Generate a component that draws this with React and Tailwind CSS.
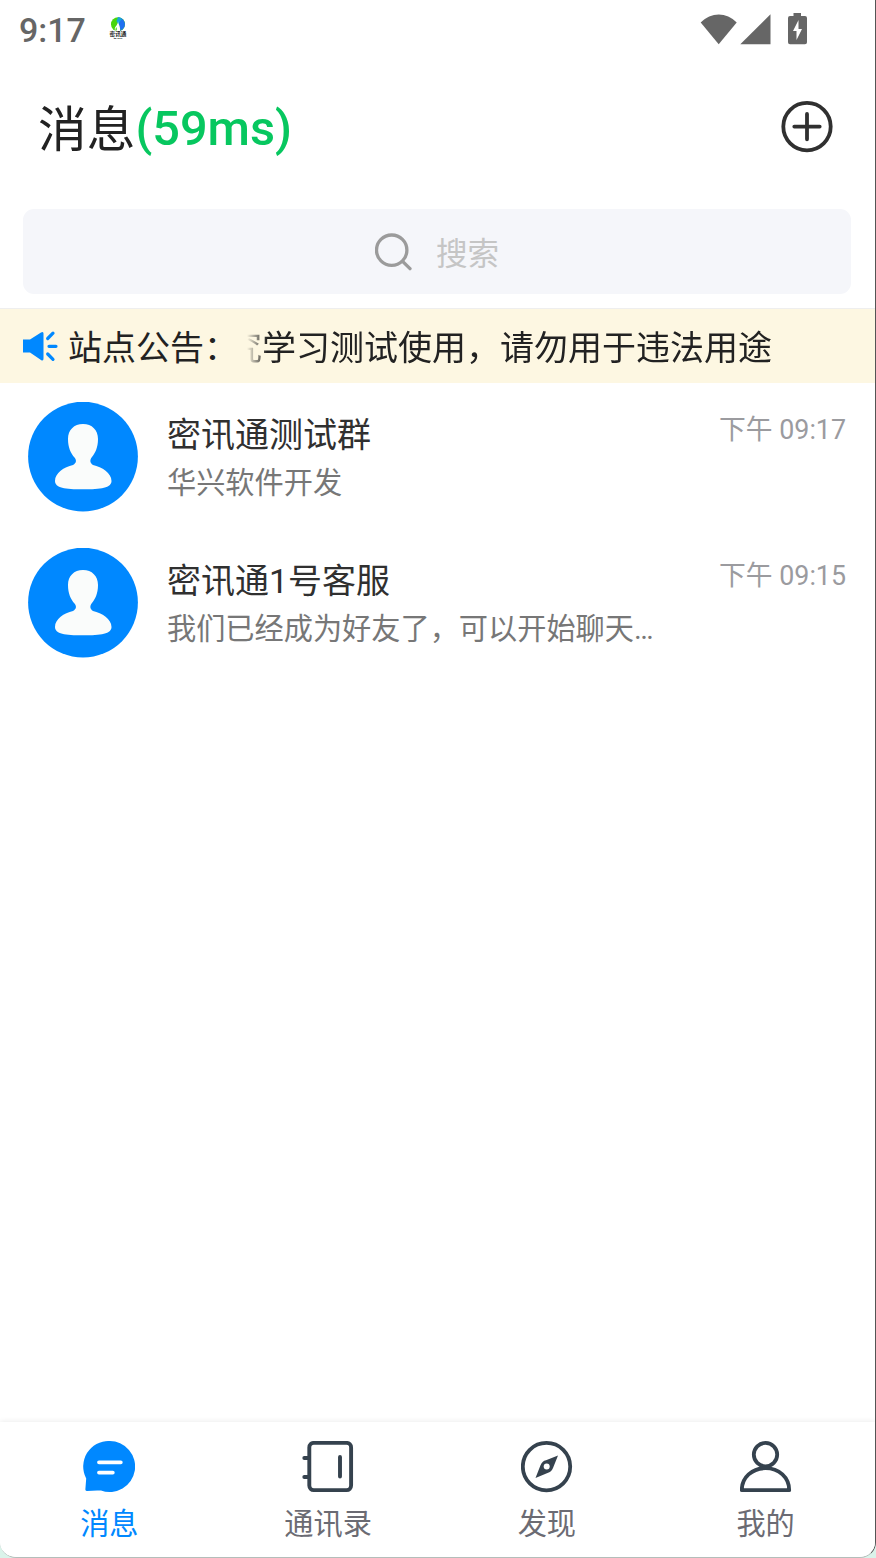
import React, { useState } from 'react';

const chats = [
  { id: 1, name: '密讯通测试群', preview: '华兴软件开发', time: '下午 09:17' },
  { id: 2, name: '密讯通1号客服', preview: '我们已经成为好友了，可以开始聊天…', time: '下午 09:15' },
];

const tabs = [
  { key: 'messages', label: '消息', Icon: MessageIcon },
  { key: 'contacts', label: '通讯录', Icon: ContactsIcon },
  { key: 'discover', label: '发现', Icon: CompassIcon },
  { key: 'me', label: '我的', Icon: UserIcon },
];

function MessageIcon() {
  return (
    <svg width="52" height="52" viewBox="0 0 52 52" fill="none">
      <path d="M26.3 0A25.5 25.5 0 1 1 18 49.5Q12 49.1 4 50Q2.1 50.2 2.4 48L3.2 37.5A25.5 25.5 0 0 1 26.3 0Z" fill="#0088ff" />
      <path d="M16 21.3H37.8M16 31.6H29.8" stroke="#fff" strokeWidth="3.8" strokeLinecap="round" />
    </svg>
  );
}

function ContactsIcon() {
  return (
    <svg width="52" height="52" viewBox="0 0 52 52" fill="none" stroke="#35424e" strokeWidth="3.9" strokeLinecap="round">
      <rect x="7.3" y="1.9" width="41.8" height="47.2" rx="4.5" />
      <path d="M2.3 17H6.5M2.3 36H6.5M38 16V35.5" />
    </svg>
  );
}

function CompassIcon() {
  return (
    <svg width="52" height="52" viewBox="0 0 52 52" fill="none">
      <circle cx="25.5" cy="25.6" r="23.7" stroke="#35424e" strokeWidth="3.8" />
      <path d="M37 14.5L32 27Q30.5 31 26.5 32L14.5 37L19.5 24.3Q21 20 25 19.2Z" fill="#35424e" />
      <circle cx="25.7" cy="25.6" r="3" fill="#fff" />
    </svg>
  );
}

function UserIcon() {
  return (
    <svg width="52" height="52" viewBox="0 0 52 52" fill="none" stroke="#35424e" strokeWidth="3.8" strokeLinejoin="round">
      <circle cx="25.5" cy="13.6" r="11.7" />
      <path d="M1.8 49.2C1.8 36.6 12 27.2 25.5 27.2S49.2 36.6 49.2 49.2Z" />
    </svg>
  );
}

function Avatar() {
  return (
    <svg width="110" height="110" viewBox="0 0 110 110" className="shrink-0">
      <circle cx="55" cy="54.6" r="54.9" fill="#0088ff" />
      <path
        d="M55 22C64 22 70 28 70 37C70 46 67 51 64 55C61.5 58 62 61 65 63C74 65 83.5 71 83.5 79C83.5 86 73 87.3 55 87.3S27 86 27 79C27 71 36 65 45 63C48.5 61 49 58 46 55C43 51 40 46 40 37C40 28 46 22 55 22Z"
        fill="#fafcfb"
      />
    </svg>
  );
}

function AppBadge() {
  return (
    <div className="ml-[23px] mt-[17px] w-[18px] flex flex-col items-center">
      <svg className="shrink-0" width="14" height="15" viewBox="0 0 14 15">
        <circle cx="7" cy="7.3" r="7" fill="#48d60c" />
        <path d="M7 .3A7 7 0 0 1 9 14C10.500 10.500 6.500 8 7 4Z" fill="#1f70f0" />
        <path d="M7 .3Q9.500 .5 11 2L7 7L5.500 4Z" fill="#16a6dc" />
        <path d="M7.200 3.500C6.500 6.500 9.800 8.500 9 14.500H4.500C7 12 5.500 11.500 5.300 10Q4 12 4.500 14.500Q2.500 11.500 5.500 8.500Q7.200 6.500 7.200 3.500Z" fill="#fff" />
      </svg>
      <span className="text-[5.6px] leading-[5px] font-bold text-[#222] whitespace-nowrap">密讯通</span>
      <span className="mt-px text-[2.5px] leading-[2px] font-bold text-[#222] whitespace-nowrap">MI XUN</span>
    </div>
  );
}

function StatusBar() {
  return (
    <div className="h-[60px] flex items-start pl-[19px] pr-[67px]">
      <span className="mt-[10px] text-[34px] leading-[40px] font-medium text-[#666]">9:17</span>
      <AppBadge />
      <svg className="ml-auto mt-3" width="108" height="34" viewBox="0 0 108 34" fill="#666">
        <path d="M.7 10.5C11 -.3 26.5 -.3 36.7 10.5L18.7 32.2Z" />
        <path d="M70.5 2.2V32.3H40.3Z" />
        <path d="M93.5 1H101V4H105Q107 4 107 6V30.3Q107 32.2 105 32.2H90Q88 32.2 88 30.3V6Q88 4 90 4H93.5Z" />
        <path d="M98.5 8L93 19H96.5V28L102 17H98.5Z" fill="#fff" />
      </svg>
    </div>
  );
}

export default function App() {
  const [active, setActive] = useState('messages');

  return (
    <div className="h-[1558px] w-[876px] bg-[#daf3ea] font-[Roboto,'Noto_Sans_CJK_SC',sans-serif]">
      <div className="h-full flex flex-col overflow-hidden bg-white border-r border-r-[#555] border-b border-b-[#b4beba] rounded-b-[16px]">
        <StatusBar />

        <header className="h-[149px] pl-[38px] pr-[42px] flex items-start justify-between">
          <h1 className="mt-[40px] text-[48.7px] leading-[58px] text-[#222]">
            <span className="align-[-2px]">消息</span>
            <span className="font-medium text-[#07c75f]">(59ms)</span>
          </h1>
          <button className="mt-[41px]">
            <svg width="52" height="52" viewBox="0 0 52 52" fill="none" stroke="#303030" strokeWidth="3.8" strokeLinecap="round">
              <circle cx="26" cy="25.6" r="23.7" />
              <path d="M13.3 25.6H38.7M26 12.9V38.3" />
            </svg>
          </button>
        </header>

        <div className="ml-[23px] mr-6 h-[85px] shrink-0 rounded-[11px] bg-[#f5f6fa] flex items-center justify-center">
          <svg className="mt-px" width="38" height="38" viewBox="0 0 38 38" fill="none" stroke="#9b9b9b" strokeWidth="3.3" strokeLinecap="round">
            <circle cx="16.7" cy="17.2" r="15.2" />
            <path d="M27.6 28.3L35 35.7" />
          </svg>
          <span className="ml-[23px] pt-[6px] text-[31.6px] leading-[40px] text-[#c5c5c5]">搜索</span>
        </div>

        <div className="mt-[14px] h-[75px] shrink-0 border-t border-[#eeeeee] bg-[#fdf7e2] pl-[22px] flex items-center">
          <svg width="36" height="32" viewBox="0 0 36 32" fill="none">
            <path d="M1 9.5H8L19 2.5Q21.5 1 21.5 3.5V28.5Q21.5 31.5 19 30L8 22.5H1Z" fill="#0088ff" />
            <path d="M25.7 8.5L31 3.2M27 16.3H34M25.7 24L31 29.3" stroke="#0088ff" strokeWidth="3.2" strokeLinecap="round" />
          </svg>
          <span className="ml-[10px] pt-[4px] text-[34px] leading-[42px] text-[#222] whitespace-nowrap">站点公告：</span>
          {/* scrolling notice, faded where it leaves on the left */}
          <div className="ml-[9px] flex-1 overflow-hidden mask-l-from-[calc(100%-20px)] mask-l-to-100%">
            <p className="-ml-[19px] pt-[4px] text-[34px] leading-[42px] text-[#222] whitespace-nowrap">究学习测试使用，请勿用于违法用途</p>
          </div>
        </div>

        <main className="flex-1">
          {chats.map((chat) => (
            <div key={chat.id} className="h-[146px] pt-[19px] pl-7 pr-[29px] flex items-start">
              <Avatar />
              <div className="ml-[29px] flex-1 min-w-0">
                <p className="mt-[12px] text-[34px] leading-[42px] text-[#303030]">{chat.name}</p>
                <p className="mt-[8px] text-[29.2px] leading-[38px] text-[#777] whitespace-nowrap">{chat.preview}</p>
              </div>
              <span className="mt-[10px] text-[26.8px] leading-[36px] text-[#9b9b9f] whitespace-nowrap">{chat.time}</span>
            </div>
          ))}
        </main>

        <nav className="h-[135px] shrink-0 flex bg-white shadow-[0_-1px_5px_rgba(0,0,0,0.07)]">
          {tabs.map(({ key, label, Icon }) => (
            <button key={key} onClick={() => setActive(key)} className="flex-1 flex flex-col items-center pt-[19px]">
              <Icon />
              <span className={`mt-[12px] text-[29.2px] leading-[38px] ${active === key ? 'text-[#0088ff]' : 'text-[#6b6b73]'}`}>
                {label}
              </span>
            </button>
          ))}
        </nav>
      </div>
    </div>
  );
}
